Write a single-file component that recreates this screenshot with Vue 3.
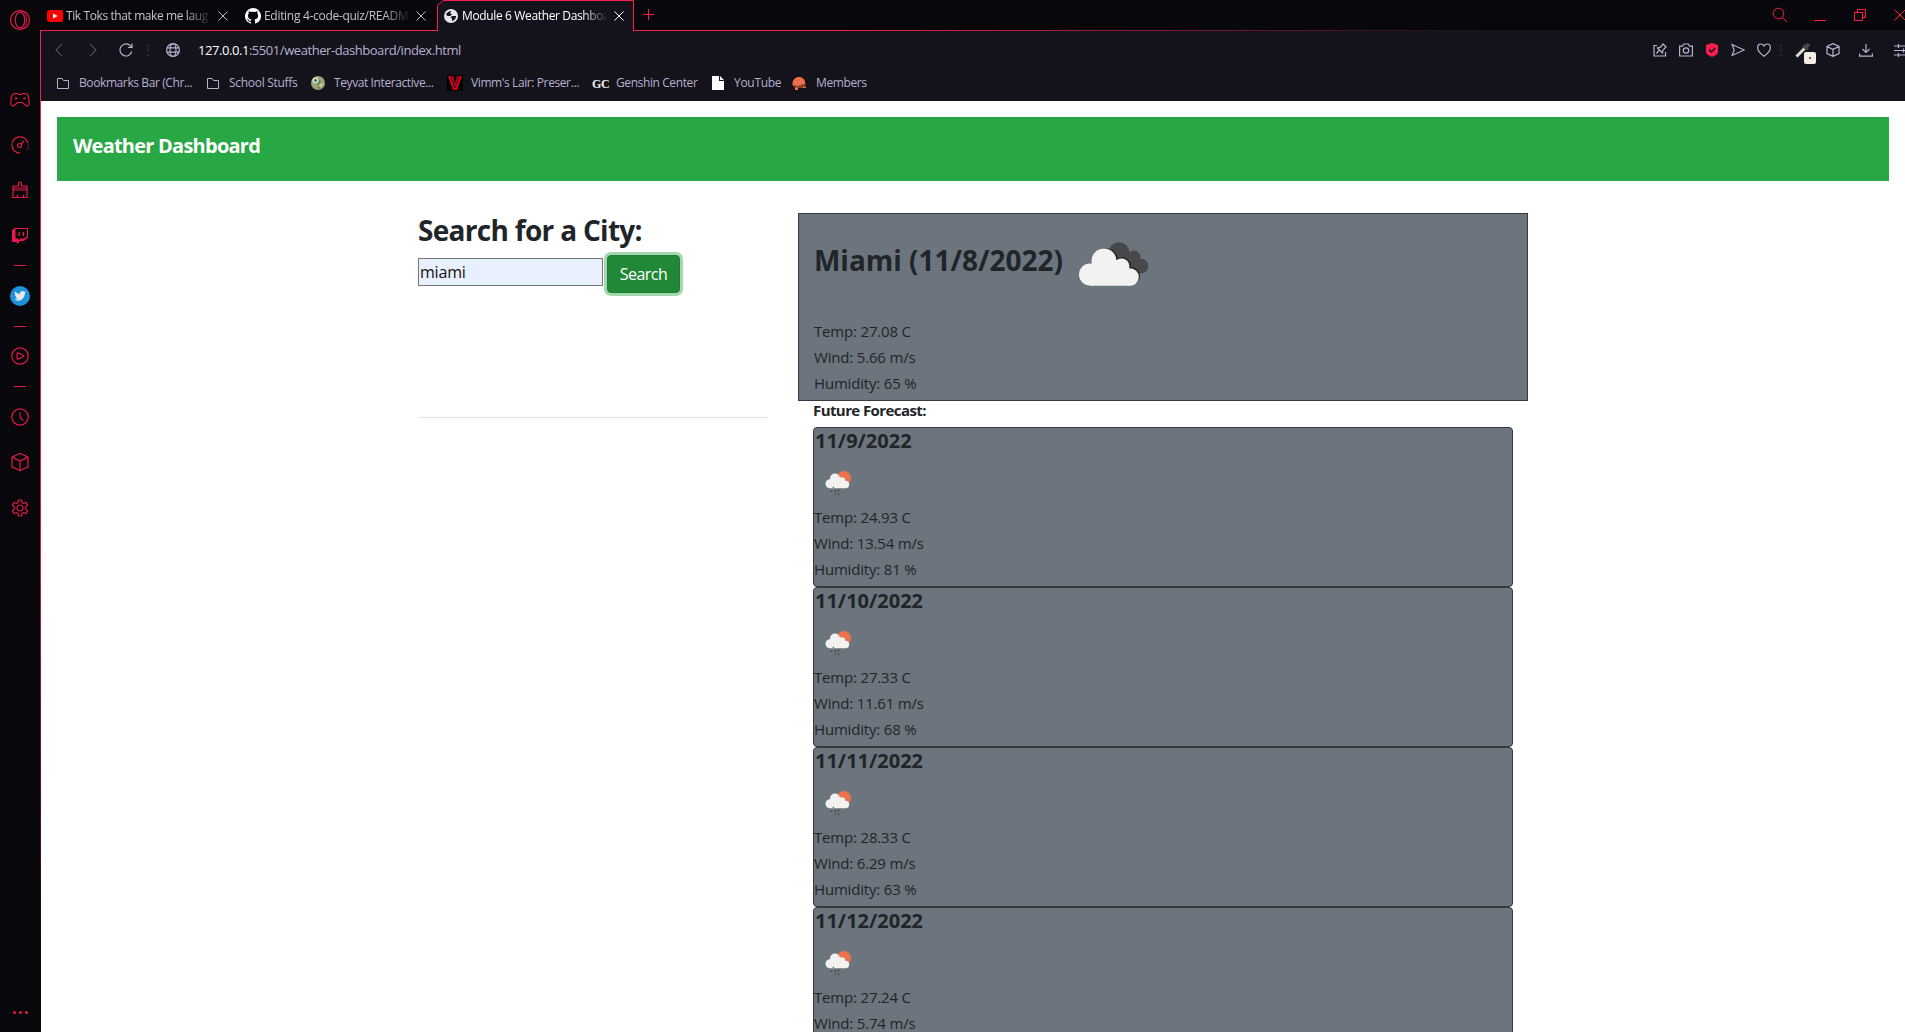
<script setup>
const sidebar = [
  { icon: 'opera', h: 40 },
  { icon: 'gap', h: 38 },
  { icon: 'gamepad', h: 44 },
  { icon: 'speed', h: 45 },
  { icon: 'broom', h: 46 },
  { icon: 'twitch', h: 45 },
  { icon: 'dash', h: 14 },
  { icon: 'twitter', h: 48 },
  { icon: 'dash', h: 12 },
  { icon: 'play', h: 48 },
  { icon: 'dash', h: 13 },
  { icon: 'clock', h: 48 },
  { icon: 'cube', h: 42 },
  { icon: 'gear', h: 49 }
]

const bookmarks = [
  { icon: 'folder', label: 'Bookmarks Bar (Chr...', w: 150, slot: 22, ls: -0.4 },
  { icon: 'folder', label: 'School Stuffs', w: 104, slot: 22, ls: -0.3 },
  { icon: 'teyvat', label: 'Teyvat Interactive...', w: 136, slot: 23, ls: -0.4 },
  { icon: 'vimm', label: "Vimm's Lair: Preser...", w: 145, slot: 24, ls: -0.4 },
  { icon: 'gc', label: 'Genshin Center', w: 120, slot: 24, ls: -0.4 },
  { icon: 'page', label: 'YouTube', w: 80, slot: 22, ls: -0.3 },
  { icon: 'members', label: 'Members', w: 90, slot: 24, ls: -0.4 }
]

const forecast = [
  { date: '11/9/2022', temp: '24.93', wind: '13.54', humidity: 81 },
  { date: '11/10/2022', temp: '27.33', wind: '11.61', humidity: 68 },
  { date: '11/11/2022', temp: '28.33', wind: '6.29', humidity: 63 },
  { date: '11/12/2022', temp: '27.24', wind: '5.74' }
]
</script>

<template>
  <div class="window">
    <aside class="sidebar">
      <div v-for="(s, i) in sidebar" :key="i" class="side-item" :style="{ height: s.h + 'px' }">
        <svg v-if="s.icon === 'opera'" width="22" height="22" viewBox="0 0 22 22">
          <circle cx="11" cy="11" r="9.5" /><ellipse cx="11" cy="11" rx="4.7" ry="7.8" />
          <path d="M8 2.4C10 1.2 14 1.6 16 5c2 4 2 8 0 12-2 3.400-6 3.800-8 2.600" stroke-width=".9" />
        </svg>
        <svg v-else-if="s.icon === 'gamepad'" width="20" height="16" viewBox="0 0 20 16">
          <path d="M4.800 1.500h2.700l1 1h3l1-1h2.700c2.300 0 2.800 1.500 3.300 3.500.6 2.500.9 5 .5 7-.4 2.300-2.600 2.500-3.800 1L12.600 10.500H7.400L4.800 13c-1.200 1.500-3.400 1.300-3.800-1-.4-2-.1-4.500.5-7C2 3 2.500 1.500 4.800 1.500z" />
          <path d="M6 4.800v3M4.500 6.300h3M13 6.300h3M14.500 5.500v1.600" stroke-width="1" />
        </svg>
        <svg v-else-if="s.icon === 'speed'" width="20" height="20" viewBox="0 0 20 20">
          <path d="M10 18.200A8.200 8.200 0 1 1 18 8" /><path d="M18.200 9.500v1M18 12v1M17 14.500v.8" />
          <circle cx="9.500" cy="10.500" r="2" /><path d="M11 9l3-3" />
        </svg>
        <svg v-else-if="s.icon === 'broom'" width="18" height="18" viewBox="0 0 18 18">
          <path d="M7.500 5V2.300q0-1.300 1.500-1.300t1.500 1.300V5H16v4H2V5h5.500M2.500 9L1.600 16.500H16V9M6 16.500l.5-3M12.500 16.500v-3M2 7h14" />
        </svg>
        <svg v-else-if="s.icon === 'twitch'" width="18" height="18" viewBox="0 0 18 18">
          <path class="red" fill-rule="evenodd" d="M3.500 1H17v9.500L12.500 14H9l-3 3.500V15H1V3.500zM4.500 2v9.500H7.500v2l2-2H13l3-2V2zM7.500 5h1.300v4H7.500zM11.700 5H13v4h-1.300z" />
        </svg>
        <span v-else-if="s.icon === 'dash'" class="dash"></span>
        <svg v-else-if="s.icon === 'twitter'" width="20" height="20" viewBox="0 0 20 20" class="solid">
          <circle cx="10" cy="10" r="10" fill="#1d93dc" />
          <path fill="#e9e9ec" transform="translate(4.200 4) scale(.49)" d="M23.950 4.570a10 10 0 0 1-2.820.77 4.960 4.960 0 0 0 2.160-2.720 10 10 0 0 1-3.130 1.190 4.920 4.920 0 0 0-8.380 4.480A13.930 13.930 0 0 1 1.640 3.160a4.920 4.920 0 0 0 1.520 6.570 4.900 4.900 0 0 1-2.230-.61v.06a4.920 4.920 0 0 0 3.950 4.830 5 5 0 0 1-2.210.08 4.940 4.940 0 0 0 4.600 3.420A9.870 9.870 0 0 1 0 19.540a14 14 0 0 0 7.550 2.210c9.050 0 14-7.500 14-13.980 0-.21 0-.42-.02-.63a9.940 9.940 0 0 0 2.460-2.550z" />
        </svg>
        <svg v-else-if="s.icon === 'play'" width="18" height="18" viewBox="0 0 18 18">
          <circle cx="9" cy="9" r="8.200" /><path d="M6.300 5.900q3.600.7 6.600 3.100Q9.900 11.400 6.300 12.100 5.700 9 6.300 5.900z" />
        </svg>
        <svg v-else-if="s.icon === 'clock'" width="18" height="18" viewBox="0 0 18 18">
          <circle cx="9" cy="9" r="8.200" /><path d="M9 4.500V9l3.200 3.500" />
        </svg>
        <svg v-else-if="s.icon === 'cube'" width="18" height="20" viewBox="0 0 18 20">
          <path d="M9 1.300l8 3.800v9.800l-8 3.800-8-3.800V5.100zM1 5.100l8 4 8-4M9 9.100v9.500" />
        </svg>
        <svg v-else-if="s.icon === 'gear'" width="18" height="18" viewBox="0 0 18 18">
          <path d="M7.500 1h3l.5 2.500 1.500.9 2.500-1 1.500 2.600L14.700 8v2l1.800 2-1.500 2.600-2.500-1-1.500.9-.5 2.500h-3L7 14.500l-1.500-.9-2.500 1L1.500 12l1.800-2V8L1.500 6 3 3.400l2.500 1L7 3.500z" />
          <circle cx="9" cy="9" r="3" />
        </svg>
      </div>
      <div class="dots"><i></i><i></i><i></i></div>
    </aside>

    <div class="main">
      <div class="tabs">
        <div class="tab t1">
          <svg class="yt" width="16" height="12" viewBox="0 0 16 12"><rect width="16" height="12" rx="2.500" fill="#f00" /><path d="M6 3.500v5L10.500 6z" fill="#fff" /></svg>
          <span class="tab-title">Tik Toks that make me laug</span>
          <svg class="x" width="10" height="10" viewBox="0 0 10 10"><path d="M.5.5l9 9M9.500.5l-9 9" /></svg>
        </div>
        <div class="tab t2">
          <svg width="16" height="16" viewBox="0 0 16 16" fill="#fff"><path d="M8 0a8 8 0 0 0-2.530 15.590c.4.070.55-.17.55-.38v-1.500c-2.010.37-2.530-.49-2.690-.94-.09-.23-.48-.94-.82-1.130-.28-.15-.68-.52-.01-.53.63-.01 1.080.58 1.230.82.720 1.210 1.870.87 2.330.66.070-.52.280-.87.510-1.070-1.780-.2-3.640-.89-3.640-3.950 0-.87.310-1.590.82-2.150-.08-.2-.36-1.020.08-2.120 0 0 .67-.21 2.200.82a7.600 7.600 0 0 1 4 0c1.530-1.040 2.200-.82 2.200-.82.440 1.100.160 1.920.080 2.120.51.560.82 1.270.82 2.150 0 3.070-1.870 3.750-3.650 3.950.29.250.54.730.54 1.480v2.210c0 .21.150.46.550.38A8 8 0 0 0 8 0z" /></svg>
          <span class="tab-title">Editing 4-code-quiz/READM</span>
          <svg class="x" width="10" height="10" viewBox="0 0 10 10"><path d="M.5.5l9 9M9.500.5l-9 9" /></svg>
        </div>
        <div class="tab active">
          <svg class="edge" width="197" height="31" viewBox="0 0 197 31"><path d="M.5 31V5.500L6 .500H196.500V31" /></svg>
          <svg width="14" height="14" viewBox="0 0 14 14"><circle cx="7" cy="7" r="7" fill="#e6e6ea" /><path d="M2 5.500C3 3.500 5 2 7.500 2L6 4l2 1.500L6 7H3.500zM8 7h4c.3 2-1.500 4.500-4 5V9.500L6.500 8.500z" fill="#14121b" /></svg>
          <span class="tab-title">Module 6 Weather Dashboa</span>
          <svg class="x" width="10" height="10" viewBox="0 0 10 10"><path d="M.5.5l9 9M9.500.5l-9 9" /></svg>
        </div>
        <svg class="plus" width="11" height="11" viewBox="0 0 11 11"><path d="M5.500 0v11M0 5.500h11" /></svg>
        <div class="controls">
          <svg width="16" height="16" viewBox="0 0 16 16"><circle cx="6.500" cy="6.500" r="5.300" /><path d="M10.400 10.400L15 15" /></svg>
          <svg width="12" height="12" viewBox="0 0 12 12"><path d="M0 11.500h12" /></svg>
          <svg width="12" height="12" viewBox="0 0 12 12"><path d="M3.500 3.500v-3h8v8h-3M.5 3.500h8v8h-8z" /></svg>
          <svg width="12" height="12" viewBox="0 0 12 12"><path d="M.5.5l11 11M11.500.5l-11 11" /></svg>
        </div>
      </div>

      <div class="chrome">
        <div class="address">
          <svg class="nav dim" width="8" height="14" viewBox="0 0 8 14"><path d="M7.300.7L1 7l6.300 6.300" /></svg>
          <svg class="nav dim fwd" width="8" height="14" viewBox="0 0 8 14"><path d="M.7.7L7 7 .7 13.300" /></svg>
          <svg class="reload" width="14" height="14" viewBox="0 0 14 14"><path d="M12.800 8.500A6 6 0 1 1 11.500 3L13 4.500M13 .5v4H9" /></svg>
          <span class="vdots first"></span>
          <svg class="globe" width="14" height="14" viewBox="0 0 14 14"><circle cx="7" cy="7" r="6.400" /><ellipse cx="7" cy="7" rx="3" ry="6.400" /><path d="M1 4.800h12M1 9.200h12" /></svg>
          <span class="url"><b>127.0.0.1</b>:5501/weather-dashboard/index.html</span>
          <div class="tools">
            <svg width="14" height="14" viewBox="0 0 14 14"><path d="M4 2.500H1v10.500h11.500V9M3.500 10.500l2.500-3M4.500 5l5 5 .5-3 3-3L10 1 7.500 4.200z" /></svg>
            <svg width="14" height="14" viewBox="0 0 14 14"><path d="M.6 3.200H3.500L4.700 1h4.600l1.200 2.200h2.900v9.800H.6z" /><circle cx="7" cy="7.500" r="2.700" /></svg>
            <svg width="14" height="14" viewBox="0 0 14 14" class="shield"><path d="M7 0L13 2v6.500C13 11.500 9.500 13 7 14 4.500 13 1 11.500 1 8.500V2z" /><path class="tick" d="M4 6.500L6.300 9 10.300 5" /></svg>
            <svg width="14" height="14" viewBox="0 0 14 14"><path d="M1 1.500L13.300 7 1 12.500 3.200 7z" /></svg>
            <svg width="14" height="14" viewBox="0 0 14 14"><path d="M7 13.300C3.200 10.600.6 8 .6 4.800.6 2.600 2 1 3.900 1 5.300 1 6.400 1.800 7 3 7.600 1.800 8.700 1 10.100 1c1.900 0 3.300 1.600 3.300 3.800 0 3.200-2.600 5.800-6.400 8.500z" /></svg>
            <span class="vdots"></span>
            <div class="picker">
              <svg width="16" height="16" viewBox="0 0 16 16"><path d="M1.500 14.500L10 6" stroke="#d9d9d6" stroke-width="3" /><path d="M8.500 3.500l4 4M11 5l3-3" stroke="#484848" stroke-width="3.500" /></svg>
              <span class="chip"></span>
            </div>
            <svg class="box" width="14" height="14" viewBox="0 0 14 14"><path d="M7 .6l6 2.800v7.200l-6 2.800-6-2.800V3.400zM1 3.600l6 2.800 6-2.800M7 6.400v7" /></svg>
            <svg class="down" width="14" height="14" viewBox="0 0 14 14"><path d="M7 1v8.500M3.500 6L7 9.500 10.500 6M.6 10.500v2.700h12.800v-2.700" /></svg>
            <svg class="sliders" width="16" height="14" viewBox="0 0 16 14"><path d="M0 3h16M0 7.500h16M0 12h16M4.500 1v4M9.500 5.500v4M4.500 10v4" /></svg>
          </div>
        </div>
        <div class="bookmarks">
          <div v-for="b in bookmarks" :key="b.label" class="bookmark" :style="{ width: b.w + 'px' }">
            <span class="slot" :style="{ width: b.slot + 'px' }">
              <svg v-if="b.icon === 'folder'" width="12" height="11" viewBox="0 0 12 11"><path d="M.5.5h4.500l1.500 2h5v8H.500z" /></svg>
              <svg v-else-if="b.icon === 'teyvat'" width="14" height="14" viewBox="0 0 14 14" class="solid"><circle cx="7" cy="7" r="7" fill="#a0a577" /><path d="M3 2l5 1 4 5-3 5-3-1 2-3-6-2z" fill="#74845e" /><circle cx="4.500" cy="4.500" r="3" fill="#dfe4cb" /><circle cx="4.500" cy="4.500" r="1.400" fill="#26726f" /><path d="M8 9l3-3 1 3-3 3z" fill="#d2c995" /></svg>
              <svg v-else-if="b.icon === 'vimm'" width="16" height="16" viewBox="0 0 16 16" class="solid"><path d="M0 0h16v16H0z" fill="#000" /><path d="M1 1h5l2 8 2-8h5L10 15H6z" fill="#e80000" /><path d="M4 1l3.500 12M12 1L8 13" stroke="#320a52" stroke-width="1.200" /></svg>
              <span v-else-if="b.icon === 'gc'" class="gc">GC</span>
              <svg v-else-if="b.icon === 'page'" width="12" height="14" viewBox="0 0 12 14" class="solid"><path d="M0 0h7v5h5v9H0z" fill="#fff" /><path d="M8 0l4 4H8z" fill="#fff" /></svg>
              <svg v-else width="15" height="13" viewBox="0 0 15 13" class="solid"><path d="M1 9C-1 4 3 0 7 0s6.500 3 6 7l-2 2-3 1z" fill="#ee704b" /><path d="M2 8l4 1 5-2 3 1-1 3H5L3 12z" fill="#8d4029" /><path d="M3 10.500h3V13H3zM11 10h3v1h-3z" fill="#ee704b" /></svg>
            </span>
            <span class="label" :style="{ letterSpacing: b.ls + 'px' }">{{ b.label }}</span>
          </div>
        </div>
      </div>

      <div class="page">
        <header class="banner"><h1>Weather Dashboard</h1></header>
        <div class="content">
          <section class="search">
            <h2>Search for a City:</h2>
            <div class="row">
              <input type="text" value="miami" />
              <button>Search</button>
            </div>
            <hr />
          </section>
          <section class="results">
            <div class="today">
              <div class="headline">
                <h2>Miami (11/8/2022)</h2>
                <svg width="70" height="44" viewBox="0 0 70 44">
                  <g fill="#48484a"><circle cx="40" cy="10.500" r="10.300" /><circle cx="55" cy="15" r="6.500" /><circle cx="62" cy="24" r="7.300" /><path d="M38 10h18v14l5 7H44z" /></g>
                  <g fill="#242628"><circle cx="26.500" cy="19" r="12.800" /><circle cx="43.500" cy="24" r="8.500" /><circle cx="52" cy="34" r="9" /></g>
                  <g fill="#f2f2f0"><circle cx="25" cy="19" r="12.500" /><circle cx="42.500" cy="24.500" r="8" /><circle cx="11" cy="32.500" r="11" /><circle cx="51" cy="35" r="8.800" /><path d="M11 25l10-7h22l8 12v13.700H11z" /></g>
                </svg>
              </div>
              <p>Temp: 27.08 C</p>
              <p>Wind: 5.66 m/s</p>
              <p>Humidity: 65 %</p>
            </div>
            <div class="future">
              <h5>Future Forecast:</h5>
              <article v-for="d in forecast" :key="d.date" class="day">
                <h3>{{ d.date }}</h3>
                <svg width="50" height="50" viewBox="0 0 50 50">
                  <circle cx="30" cy="21" r="7" fill="#ec7250" />
                  <g fill="#f2f2f0"><circle cx="21" cy="21.500" r="5" /><circle cx="27.500" cy="24" r="3.700" /><circle cx="16" cy="26.700" r="4.500" /><circle cx="31.500" cy="27.500" r="3.700" /><path d="M16 23l4-3 8 2 3.500 4v5.200H16z" /></g>
                  <path d="M19.500 30l-.3 1.200M18 33.500l-.8 1.500M21.800 33l-1 2.500M25 32.500l-.8 2M21 37l-.5 1M25 36l-1 2" stroke="#424548" stroke-width="1.100" />
                </svg>
                <p>Temp: {{ d.temp }} C</p>
                <p>Wind: {{ d.wind }} m/s</p>
                <p v-if="d.humidity">Humidity: {{ d.humidity }} %</p>
              </article>
            </div>
          </section>
        </div>
      </div>
    </div>
  </div>
</template>

<style>
body { margin: 0; overflow: hidden; }
</style>

<style scoped>
* { box-sizing: border-box; }
svg { display: block; flex: none; }
h1, h2, h3, h5, p { margin: 0; white-space: nowrap; }
.window { display: flex; width: 1905px; height: 1032px; overflow: hidden; background: #fff; font-family: "Open Sans", "Noto Sans", sans-serif; color: #212529; }

.sidebar { width: 40px; flex: none; display: flex; flex-direction: column; background: #08070c; }
.side-item { display: flex; align-items: center; justify-content: center; flex: none; }
.side-item svg:not(.solid) { fill: none; stroke: #e01a48; stroke-width: 1.200; }
.side-item svg .red { fill: #e8194c; stroke: none; }
.dash { width: 12px; height: 1px; background: #e8194c; }
.dots { margin-top: auto; height: 40px; display: flex; align-items: center; justify-content: center; gap: 3px; }
.dots i { width: 3px; height: 3px; border-radius: 50%; background: #e8194c; }

.main { flex: 1; min-width: 0; display: flex; flex-direction: column; background: linear-gradient(#fa1e4e, #e01a48 50%, #08070c 92%) 0 30px / 1px 100% no-repeat #08070c; }
.tabs { height: 31px; flex: none; display: flex; background: linear-gradient(90deg, #fa1e4e 42%, #14121b 78%) 0 30px / 100% 1px no-repeat #08070c; }
.tab { position: relative; display: flex; align-items: center; height: 31px; flex: none; font-size: 12px; color: #c4c3ca; }
.t1 { width: 198px; padding-left: 7px; }
.t2 { width: 199px; padding-left: 7px; }
.active { width: 197px; padding-left: 7px; background: #14121b; color: #fff; clip-path: polygon(0 5px, 6px 0, 100% 0, 100% 100%, 0 100%); }
.edge { position: absolute; left: 0; top: 0; fill: none; stroke: #fa1e4e; }
.tab-title { width: 144px; margin-left: 3px; white-space: nowrap; line-height: 20px; -webkit-mask-image: linear-gradient(90deg, #000 120px, rgba(0, 0, 0, .1) 144px); mask-image: linear-gradient(90deg, #000 120px, rgba(0, 0, 0, .1) 144px); }
.t1 .tab-title { letter-spacing: -.4px; }
.t2 .tab-title { letter-spacing: -.3px; }
.active .tab-title { margin-left: 4px; letter-spacing: -.36px; }
.x { margin-left: 8px; stroke: #c4c3ca; }
.active .x { stroke: #fff; }
.plus { margin: 9px 0 0 9px; stroke: #fa1e4e; }
.controls { margin-left: auto; margin-right: -15px; display: flex; height: 29px; align-items: center; }
.controls svg { margin: 0 14px; fill: none; stroke: #fa1e4e; }
.controls svg:first-child { margin: 0 12px; }

.chrome { height: 70px; flex: none; margin-left: 1px; background: #14121b; font-size: 12px; color: #b7b1cf; }
.address { height: 38px; display: flex; align-items: center; padding-left: 14px; }
.address svg { fill: none; stroke: #b7b1cf; stroke-width: 1.200; }
.address .dim { stroke: #514c5d; }
.fwd { margin-left: 26px; }
.reload { margin-left: 22px; }
.vdots { width: 2px; height: 11px; background: repeating-linear-gradient(#2b2836 0 2px, transparent 2px 4.500px); }
.first { margin-left: 14px; }
.globe { margin-left: 17px; }
.url { margin-left: 18px; font-size: 13px; letter-spacing: -.44px; line-height: 18px; white-space: nowrap; }
.url b { font-weight: 400; color: #fff; }
.tools { margin-left: auto; display: flex; align-items: center; gap: 12px; }
.tools .vdots { margin-left: -3px; }
.address .shield { fill: #fa1e4e; stroke: none; }
.address .tick { fill: none; stroke: #14121b; stroke-width: 1.500; }
.picker { position: relative; width: 22px; height: 16px; margin-left: 1px; }
.chip { position: absolute; left: 9px; top: 10px; width: 12px; height: 12px; border-radius: 2px; background: radial-gradient(circle, #2d2a60 .6px, #f3ece3 1px); }
.tools .box { margin-left: -3px; }
.tools .down { margin-left: 7px; }
.tools .sliders { margin: 0 -5px 0 9px; }
.bookmarks { height: 28px; display: flex; align-items: center; padding-left: 16px; }
.bookmark { flex: none; display: flex; align-items: center; white-space: nowrap; }
.label { line-height: 16px; margin-top: -1px; }
.slot { flex: none; }
.slot svg:not(.solid) { fill: none; stroke: #b7b1cf; }
.gc { font: bold 12px "Liberation Serif", serif; color: #f2f2f2; letter-spacing: -.4px; }

.page { flex: 1; min-height: 0; overflow: hidden; margin-left: 1px; padding: 16px 16px 0; background: #fff; }
.banner { height: 64px; padding: 16px; background: #28a745; color: #fff; }
h1 { font-size: 20px; line-height: 26px; letter-spacing: -.76px; }
.content { display: flex; margin-top: 32px; padding-left: 361px; }
.search { width: 350px; flex: none; }
h2 { font-size: 28px; line-height: 34px; letter-spacing: -.7px; }
.row { display: flex; align-items: flex-start; margin-top: 8px; height: 129px; }
input { width: 185px; height: 28px; margin: 3px 4px 0 0; padding: 1px; border: 1px solid #767676; background: #e8f0fe; font: 16px "Open Sans", sans-serif; letter-spacing: -.2px; color: #111; }
button { width: 73px; height: 38px; padding: 0; border: 1px solid #1e7e34; border-radius: 4px; background: #218838; box-shadow: 0 0 0 3px #a3d8af; color: #fff; font: 16px "Open Sans", sans-serif; letter-spacing: -.55px; }
hr { height: 1px; margin: 33px 0 0; border: 0; background: #e5e5e5; }
.results { width: 730px; margin-left: 30px; }
.today { height: 188px; padding: 0 15px; border: 1px solid #343a40; background: #6c757d; }
.headline { display: flex; height: 104px; padding-top: 29px; }
.headline svg { margin-top: -1px; margin-left: auto; margin-right: 363px; }
.headline h2 { letter-spacing: -.03px; width: 241px; }
p { font-size: 15px; line-height: 26px; letter-spacing: -.18px; }
.future { padding: 0 15px; }
h5 { height: 26px; font-size: 15px; line-height: 18px; letter-spacing: -.58px; }
.day { height: 160px; border: 1px solid #343a40; border-radius: 4px; background: #6c757d; }
h3 { font-size: 20px; line-height: 25px; height: 29px; padding-left: 1px; }
.day p:first-of-type { margin-top: -3px; }
</style>
